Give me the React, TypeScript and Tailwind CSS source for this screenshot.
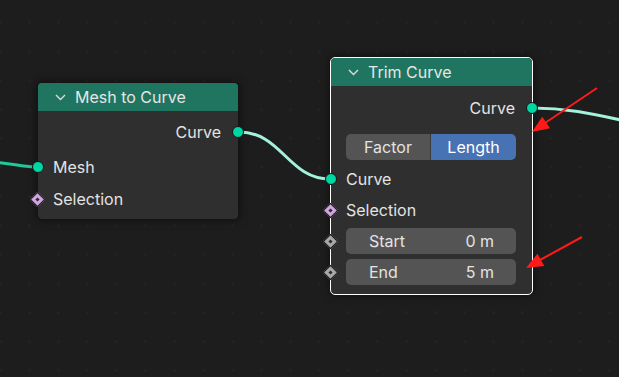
import React from "react";

type SocketKind = "geo" | "field" | "value";

const Socket = ({ kind, side }: { kind: SocketKind; side: "left" | "right" }) => {
  const pos = side === "left" ? "left-[-6px]" : "right-[-6px]";
  if (kind === "geo") {
    return (
      <span
        className={`absolute top-1/2 -translate-y-1/2 ${pos} h-[12px] w-[12px] rounded-full border border-[#151515] bg-[#00d6a3]`}
      />
    );
  }
  const fill = kind === "field" ? "bg-[#cfa6dd]" : "bg-[#a8a8a8]";
  return (
    <span
      className={`absolute top-1/2 -mt-[5.5px] left-[-6px] flex h-[11px] w-[11px] rotate-45 items-center justify-center border border-[#1a1a1a] ${fill}`}
    >
      <span className="h-[3px] w-[3px] bg-[#2a2a2a]" />
    </span>
  );
};

const Row = ({
  label,
  socket,
  out,
  className = "",
}: {
  label: string;
  socket: SocketKind;
  out?: boolean;
  className?: string;
}) => (
  <div className={`relative flex h-[26px] items-center ${out ? "justify-end pr-[17px]" : "pl-[15px]"} ${className}`}>
    <span>{label}</span>
    <Socket kind={socket} side={out ? "right" : "left"} />
  </div>
);

const Field = ({ label, value, className = "" }: { label: string; value: string; className?: string }) => (
  <div className={`relative h-[26px] ${className}`}>
    <Socket kind="value" side="left" />
    <div className="mx-[15px] mr-[16px] flex h-full items-center justify-between rounded-[5px] bg-[#545454] pl-[23px] pr-[22px]">
      <span>{label}</span>
      <span>{value}</span>
    </div>
  </div>
);

const Header = ({ title }: { title: string }) => (
  <div className="flex h-[28px] items-center gap-[9px] rounded-t-[4px] bg-[#1f7560] pl-[17px] text-[#e6e6e6]">
    <svg width="11" height="7" viewBox="0 0 11 7" className="shrink-0">
      <path d="M1 1 L5.5 5.5 L10 1" fill="none" stroke="#dcdcdc" strokeWidth="1.4" />
    </svg>
    <span>{title}</span>
  </div>
);

export default function App() {
  return (
    <div className="relative h-[377px] w-[619px] overflow-hidden bg-[#1d1d1d] bg-[radial-gradient(circle,#232323_1px,transparent_1.6px)] bg-[length:29px_29px] bg-[position:-14px_8px] font-['Inter','Noto_Sans',sans-serif] text-[16px] text-[#e3e3e3]">
      {/* wires */}
      <svg className="absolute inset-0" width="619" height="377">
        <path d="M-10 162 C 10 163, 25 167, 37 167" fill="none" stroke="#1fc99c" strokeWidth="3" />
        <path d="M239 132 C 282 132, 288 179, 330 179" fill="none" stroke="#a4f1dc" strokeWidth="3" />
        <path d="M532 108 C 565 108, 590 113, 625 121" fill="none" stroke="#a4f1dc" strokeWidth="3" />
      </svg>

      {/* Mesh to Curve */}
      <div className="absolute left-[37px] top-[82px] h-[138px] w-[202px] rounded-[5px] border border-[#151515] bg-[#2f2f2f] shadow-[0_0_8px_rgba(0,0,0,0.55)]">
        <Header title="Mesh to Curve" />
        <div className="pt-[8px]">
          <Row label="Curve" socket="geo" out />
          <Row label="Mesh" socket="geo" className="mt-[9px]" />
          <Row label="Selection" socket="field" className="mt-[6px]" />
        </div>
      </div>

      {/* Trim Curve */}
      <div className="absolute left-[330px] top-[57px] h-[238px] w-[203px] rounded-[5px] border border-white bg-[#2f2f2f] shadow-[0_0_8px_rgba(0,0,0,0.55)]">
        <Header title="Trim Curve" />
        <div className="pt-[9px]">
          <Row label="Curve" socket="geo" out />
          <div className="mx-[15px] mr-[16px] mt-[13px] flex h-[26px] overflow-hidden rounded-[5px]">
            <div className="flex w-[84px] items-center justify-center bg-[#545454]">Factor</div>
            <div className="flex flex-1 items-center justify-center border-l border-[#3a3a3a] bg-[#4772b3] text-white">
              Length
            </div>
          </div>
          <Row label="Curve" socket="geo" className="mt-[6px]" />
          <Row label="Selection" socket="field" className="mt-[5px]" />
          <Field label="Start" value="0 m" className="mt-[5px]" />
          <Field label="End" value="5 m" className="mt-[5px]" />
        </div>
      </div>

      {/* annotation arrows */}
      <svg className="pointer-events-none absolute inset-0" width="619" height="377">
        <line x1="597" y1="88" x2="545" y2="123" stroke="#ff1a1a" strokeWidth="2" />
        <polygon points="532,132 550,128.3 542.2,116.7" fill="#ff1a1a" />
        <line x1="582" y1="237" x2="540" y2="260" stroke="#ff1a1a" strokeWidth="2" />
        <polygon points="526,268 544.3,265.9 537.5,253.7" fill="#ff1a1a" />
      </svg>
    </div>
  );
}
